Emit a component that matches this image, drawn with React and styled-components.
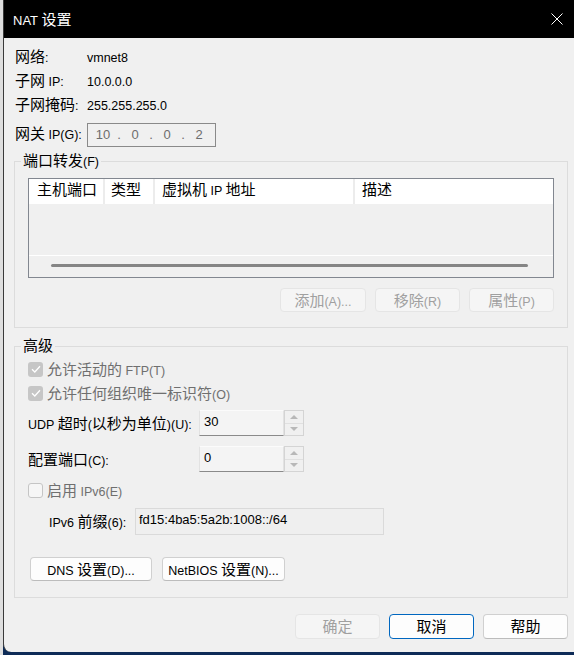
import styled, { createGlobalStyle } from "styled-components";

const GlobalStyle = createGlobalStyle`
  html, body {
    margin: 0;
    padding: 0;
  }
  body {
    font-family: "Liberation Sans", "Noto Sans CJK SC", sans-serif;
    font-size: 12.5px;
    color: #000;
  }
`;

const Han = styled.span`
  font-family: "Noto Sans CJK SC", sans-serif;
  font-size: 15px;
  line-height: 1;
`;

// Windows draws the CJK glyphs bigger than the latin ones, so split runs
const CJK = /([\u2E80-\u9FFF\uFF00-\uFFEF]+)/;
const T = ({ children }) =>
  String(children)
    .split(CJK)
    .map((part, i) => (i % 2 ? <Han key={i}>{part}</Han> : part));

const Desktop = styled.div`
  width: 574px;
  height: 655px;
  box-sizing: border-box;
  padding: 0 0 3px 3px;
  display: flex;
  background: linear-gradient(to right, #dedede 0 3px, #0e2b57 3px);
`;

const Window = styled.div`
  flex: 1;
  display: flex;
  flex-direction: column;
  background: #f0f0f0;
  border-left: 1px solid #3a3a3a;
  border-bottom-left-radius: 8px;
  overflow: hidden;
`;

const TitleBar = styled.div`
  height: 38px;
  flex: none;
  display: flex;
  align-items: center;
  padding: 0 11px 0 9px;
  background: #000;
  color: #fff;
  font-size: 13px;
`;

const Close = styled.div`
  margin-left: auto;
  display: flex;
`;

const Body = styled.div`
  flex: 1;
  display: flex;
  flex-direction: column;
  padding: 8px 6px 0 10px;
`;

const InfoRow = styled.div`
  display: flex;
  align-items: center;
  height: ${(p) => p.$h || 24}px;
  margin-top: ${(p) => p.$mt || 0}px;
  padding-left: 1px;
  line-height: 24px;
`;

const Label = styled.div`
  width: ${(p) => p.$w}px;
  flex: none;
  white-space: nowrap;
`;

const IpBox = styled.div`
  width: 129px;
  height: 24px;
  box-sizing: border-box;
  border: 1px solid #8a8a8a;
  background: #f0f0f0;
  display: flex;
  align-items: center;
  padding-left: 4px;
  color: #6d6d6d;
  font-size: 13px;
`;

const Octet = styled.span`
  width: 22px;
  text-align: center;
`;

const Dot = styled.span`
  width: 10px;
  text-align: center;
`;

const Group = styled.fieldset`
  margin: ${(p) => p.$mt || 0}px 0 0 0;
  padding: 0;
  border: 1px solid #dcdcdc;
  min-width: 0;
`;

const Legend = styled.legend`
  margin-left: 6px;
  padding: 0 2px;
  height: 18px;
  line-height: 18px;
`;

const GroupBody = styled.div`
  display: flex;
  flex-direction: column;
  padding: ${(p) => p.$pt}px 13px ${(p) => p.$pb}px 13px;
`;

const ListView = styled.div`
  height: 100px;
  box-sizing: border-box;
  border: 1px solid #828790;
  display: flex;
  flex-direction: column;
  background: #f0f0f0;
`;

const Header = styled.div`
  height: 25px;
  flex: none;
  display: flex;
  background: #fff;
`;

const Column = styled.div`
  width: ${(p) => (p.$w ? `${p.$w}px` : "auto")};
  flex: ${(p) => (p.$w ? "none" : 1)};
  box-sizing: border-box;
  padding-left: ${(p) => p.$pl}px;
  line-height: 24px;
  border-right: ${(p) => (p.$w ? "2px solid #ececec" : "none")};
  white-space: nowrap;
`;

const ListBody = styled.div`
  flex: 1;
  border-bottom: 1px solid #fff;
`;

const ScrollArea = styled.div`
  height: 21px;
  flex: none;
  padding-top: 8px;
  box-sizing: border-box;
`;

const Thumb = styled.div`
  height: 3px;
  margin: 0 25px 0 22px;
  border-radius: 2px;
  background: #858585;
`;

const ButtonRow = styled.div`
  display: flex;
  justify-content: ${(p) => (p.$left ? "flex-start" : "flex-end")};
  gap: ${(p) => p.$gap || 9}px;
  margin-top: ${(p) => p.$mt || 0}px;
  padding-left: ${(p) => p.$pl || 0}px;
`;

const Button = styled.button`
  width: ${(p) => p.$w || 85}px;
  height: ${(p) => p.$h || 24}px;
  padding: 0;
  box-sizing: border-box;
  font: inherit;
  line-height: 1;
  color: #000;
  background: #fdfdfd;
  border: 1px solid #d0d0d0;
  border-bottom-color: #bcbcbc;
  border-radius: 4px;

  &:disabled {
    color: #a0a0a0;
    background: #f5f5f5;
    border-color: #e5e5e5;
  }

  ${(p) =>
    p.$focus &&
    `
    border-color: #0067c0;
    border-bottom-color: #0067c0;
  `}
`;

const CheckRow = styled.div`
  display: flex;
  align-items: center;
  gap: 4px;
  height: 24px;
  margin-top: ${(p) => p.$mt || 0}px;
  color: #6f6f6f;
  white-space: nowrap;
`;

const CheckBox = styled.div`
  width: 15px;
  height: 15px;
  box-sizing: border-box;
  border-radius: 3px;
  display: flex;
  align-items: center;
  justify-content: center;
  background: ${(p) => (p.$checked ? "#c6c6c6" : "#f6f6f6")};
  border: ${(p) => (p.$checked ? "none" : "1px solid #c5c5c5")};
`;

const FieldRow = styled.div`
  display: flex;
  align-items: center;
  height: ${(p) => p.$h || 26}px;
  margin-top: ${(p) => p.$mt || 0}px;
  padding-left: ${(p) => p.$pl || 0}px;
  white-space: nowrap;
`;

const SpinBox = styled.div`
  width: 105px;
  height: 26px;
  display: flex;
`;

const SpinEdit = styled.div`
  flex: 1;
  box-sizing: border-box;
  padding: 1px 4px;
  line-height: 20px;
  font-size: 13px;
  background: #f4f4f4;
  border: 1px solid #e2e2e2;
  border-top-color: #fbfbfb;
  border-bottom-color: #8a8a8a;
`;

const SpinButtons = styled.div`
  width: 20px;
  display: flex;
  flex-direction: column;
  border: 1px solid #d4d4d4;
  box-sizing: border-box;
`;

const SpinHalf = styled.div`
  flex: 1;
  display: flex;
  align-items: center;
  justify-content: center;
  & + & {
    border-top: 1px solid #e0e0e0;
  }
`;

const Arrow = styled.div`
  width: 0;
  height: 0;
  border-left: 4px solid transparent;
  border-right: 4px solid transparent;
  ${(p) =>
    p.$down ? "border-top: 4px solid #b8b8b8;" : "border-bottom: 4px solid #b8b8b8;"}
`;

const TextField = styled.div`
  width: 249px;
  height: 27px;
  box-sizing: border-box;
  padding: 1px 3px;
  line-height: 20px;
  font-size: 13px;
  background: #efefef;
  border: 1px solid #dadada;
`;

const Footer = styled.div`
  display: flex;
  justify-content: flex-end;
  gap: 9px;
  margin-top: 16px;
`;

const Spinner = ({ value }) => (
  <SpinBox>
    <SpinEdit>{value}</SpinEdit>
    <SpinButtons>
      <SpinHalf>
        <Arrow />
      </SpinHalf>
      <SpinHalf>
        <Arrow $down />
      </SpinHalf>
    </SpinButtons>
  </SpinBox>
);

const Check = ({ checked, children, mt }) => (
  <CheckRow $mt={mt}>
    <CheckBox $checked={checked}>
      {checked && (
        <svg width="10" height="8" viewBox="0 0 10 8">
          <path d="M1 4.2 L3.8 7 L9 1.2" fill="none" stroke="#fff" strokeWidth="1.3" />
        </svg>
      )}
    </CheckBox>
    <span>
      <T>{children}</T>
    </span>
  </CheckRow>
);

export default function App() {
  return (
    <>
      <GlobalStyle />
      <Desktop>
        <Window>
          <TitleBar>
            <span>
              <T>NAT 设置</T>
            </span>
            <Close>
              <svg width="12" height="12" viewBox="0 0 12 12">
                <path d="M0.5 0.5 L11.5 11.5 M11.5 0.5 L0.5 11.5" stroke="#fff" strokeWidth="1" />
              </svg>
            </Close>
          </TitleBar>
          <Body>
            <InfoRow>
              <Label $w={72}><T>网络:</T></Label>
              <span>vmnet8</span>
            </InfoRow>
            <InfoRow>
              <Label $w={72}><T>子网 IP:</T></Label>
              <span>10.0.0.0</span>
            </InfoRow>
            <InfoRow>
              <Label $w={72}><T>子网掩码:</T></Label>
              <span>255.255.255.0</span>
            </InfoRow>
            <InfoRow $h={26} $mt={4}>
              <Label $w={72}><T>网关 IP(G):</T></Label>
              <IpBox>
                <Octet>10</Octet>
                <Dot>.</Dot>
                <Octet>0</Octet>
                <Dot>.</Dot>
                <Octet>0</Octet>
                <Dot>.</Dot>
                <Octet>2</Octet>
              </IpBox>
            </InfoRow>

            <Group $mt={4}>
              <Legend><T>端口转发(F)</T></Legend>
              <GroupBody $pt={8} $pb={15}>
                <ListView>
                  <Header>
                    <Column $w={76} $pl={8}><T>主机端口</T></Column>
                    <Column $w={50} $pl={6}><T>类型</T></Column>
                    <Column $w={200} $pl={7}><T>虚拟机 IP 地址</T></Column>
                    <Column $pl={7}><T>描述</T></Column>
                  </Header>
                  <ListBody />
                  <ScrollArea>
                    <Thumb />
                  </ScrollArea>
                </ListView>
                <ButtonRow $mt={10}>
                  <Button disabled $w={86}><T>添加(A)...</T></Button>
                  <Button disabled><T>移除(R)</T></Button>
                  <Button disabled><T>属性(P)</T></Button>
                </ButtonRow>
              </GroupBody>
            </Group>

            <Group $mt={9}>
              <Legend><T>高级</T></Legend>
              <GroupBody $pt={2} $pb={16}>
                <Check checked>允许活动的 FTP(T)</Check>
                <Check checked>允许任何组织唯一标识符(O)</Check>
                <FieldRow $mt={5}>
                  <Label $w={171}><T>UDP 超时(以秒为单位)(U):</T></Label>
                  <Spinner value="30" />
                </FieldRow>
                <FieldRow $mt={10}>
                  <Label $w={171}><T>配置端口(C):</T></Label>
                  <Spinner value="0" />
                </FieldRow>
                <Check mt={6}>启用 IPv6(E)</Check>
                <FieldRow $mt={6} $h={27} $pl={21}>
                  <Label $w={86}><T>IPv6 前缀(6):</T></Label>
                  <TextField>fd15:4ba5:5a2b:1008::/64</TextField>
                </FieldRow>
                <ButtonRow $left $gap={10} $mt={22} $pl={2}>
                  <Button $w={122}><T>DNS 设置(D)...</T></Button>
                  <Button $w={123}><T>NetBIOS 设置(N)...</T></Button>
                </ButtonRow>
              </GroupBody>
            </Group>

            <Footer>
              <Button disabled $h={25}><T>确定</T></Button>
              <Button $focus $h={25}><T>取消</T></Button>
              <Button $h={25}><T>帮助</T></Button>
            </Footer>
          </Body>
        </Window>
      </Desktop>
    </>
  );
}
